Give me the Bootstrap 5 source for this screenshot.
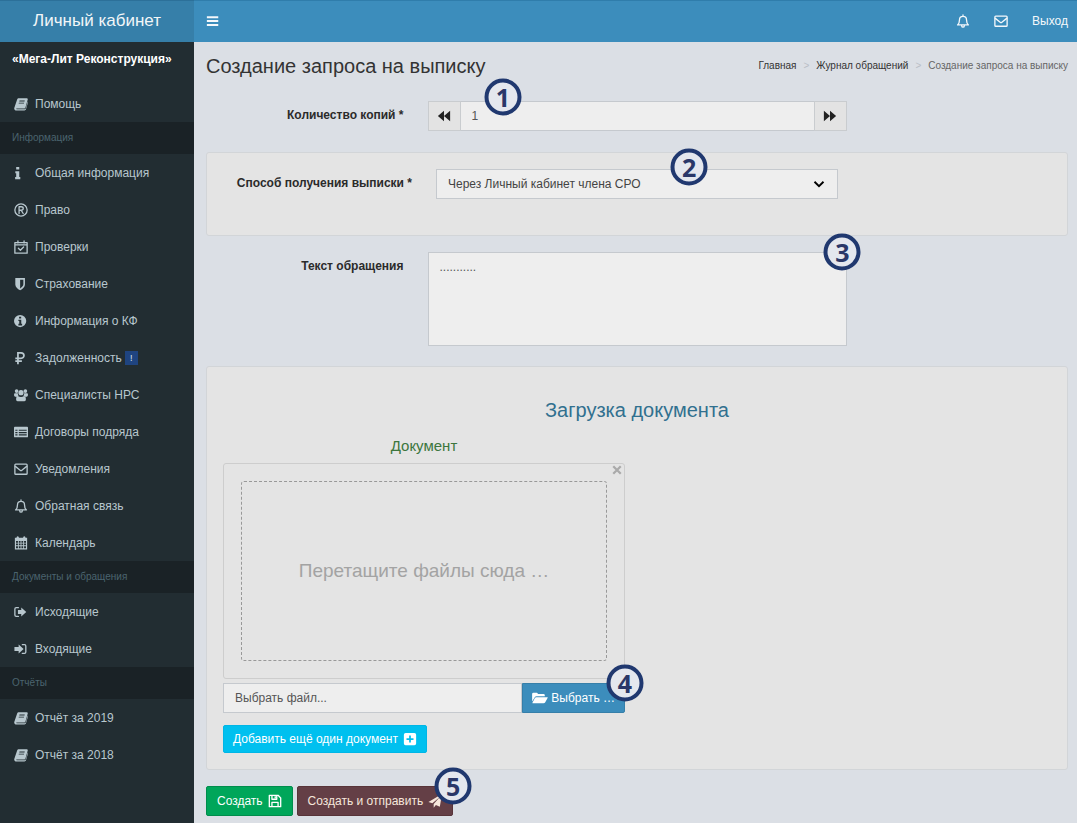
<!DOCTYPE html>
<html lang="ru">
<head>
<meta charset="utf-8">
<meta name="viewport" content="width=device-width, initial-scale=1">
<title>Личный кабинет — Создание запроса на выписку</title>
<link href="https://cdn.jsdelivr.net/npm/bootstrap@5.3.0/dist/css/bootstrap.min.css" rel="stylesheet">
<style>
  body { font-family: "Liberation Sans", Arial, sans-serif; font-size: 12px; line-height: 18px; color: #333; background: #dbdfe5; }
  svg { display: block; flex: none; }
  .ico { width: 14px; height: 14px; fill: currentColor; }
  .ico-wide { width: 16px; }
  .ln { fill: none; stroke: currentColor; stroke-width: 1.5; stroke-linejoin: round; stroke-linecap: round; }
  .shell { min-height: 100vh; }
  .side { width: 194px; background: #222d32; flex: none; }
  .brand { height: 42px; font-size: 17px; background: #367fa9; color: #f2f6f8; border-top: 1px solid #2c7099; padding-bottom: 2px; }
  .topbar { height: 42px; background: #3c8dbc; color: #f4f8fb; border-top: 1px solid #2f7dab; padding: 0 9px 2px 12px; }
  .topbar a, .topbar button { color: inherit; text-decoration: none; }
  .org { height: 43px; padding: 8px 12px 0; color: #fff; font-weight: 700; white-space: nowrap; }
  .side-link { height: 37px; padding: 0 14px; gap: 7px; color: #b8c7ce; text-decoration: none; font-size: 12px; white-space: nowrap; }
  .side-head { height: 32px; line-height: 32px; padding: 0 12px; margin: 0; font-size: 10px; color: #4b646f; background: #1a2226; }
  .flag { background: #1f4480; color: #dfe7ef; font-size: 9px; line-height: 14px; width: 13px; text-align: center; margin-left: -4px; }
  .content-area { padding: 0 9px 0 12px; }
  .page-title { font-size: 20px; line-height: 24px; margin: 0; }
  .title-row { padding-top: 12px; }
  .crumbs { --bs-breadcrumb-divider: ">"; --bs-breadcrumb-divider-color: #b9bec5; --bs-breadcrumb-item-padding-x: 7px; --bs-breadcrumb-item-active-color: #666; --bs-breadcrumb-margin-bottom: 0; font-size: 10px; }
  .crumbs a { color: #333; text-decoration: none; }
  .field-label { font-weight: 700; text-align: right; font-size: 12px; line-height: 18px; padding-top: 5px; color: #2b2b2b; }
  .field, .field:focus { background-color: #eee; border: 1px solid #c5c9ce; border-radius: 0; color: #555; font-size: 12px; line-height: 18px; padding: 5px 11px; }
  select.field, select.field:focus { background-position: right 12px center; background-size: 12px 12px; background-image: url("data:image/svg+xml,%3Csvg xmlns='http://www.w3.org/2000/svg' viewBox='0 0 16 16'%3E%3Cpath fill='none' stroke='%23000' stroke-width='2.5' d='m2 5 6 6 6-6'/%3E%3C/svg%3E"); color: #444; }
  textarea.field { height: 94px; resize: none; }
  .step-btn { width: 33px; background: #e3e3e3; border: 1px solid #c9cccf; border-radius: 0; padding: 0; display: grid; place-items: center; color: #222; }
  .panel { background: #e4e4e4; border: 1px solid #d2d5d8; border-radius: 3px; padding: 16px; }
  .panel-method { height: 84px; }
  .copies-row { padding-top: 23px; margin-bottom: 21px; }
  .text-row { margin-top: 16px; margin-bottom: 20px; }
  .panel-title { font-size: 20px; line-height: 24px; color: #31708f; margin: 15px 0 14px; }
  .doc-title { font-size: 15px; line-height: 20px; color: #3c763d; margin: 0 0 7px; }
  .preview { border: 1px solid #cdcdcd; border-radius: 3px; height: 216px; padding: 17px; position: relative; }
  .preview .shut { position: absolute; top: 0; right: 1px; width: 12px; height: 12px; padding: 0; border: 0; background: none; color: #aaa; }
  .drop { border: 1px dashed #999; border-radius: 3px; height: 100%; color: #a3a3a3; font-size: 19px; line-height: 24px; }
  .act { border-radius: 2px; font-size: 12px; line-height: 18px; padding: 4px 9px; color: #fff; display: inline-flex; align-items: center; gap: 5px; white-space: nowrap; border-width: 1px; }
  .act:hover { color: #fff; }
  .act-blue { background: #3c8dbc; border-color: #367fa9; gap: 3px; }
  .act-cyan { background: #00c0ef; border-color: #00b6e6; margin-top: 12px; }
  .act-green { background: #00a65a; border-color: #008d4c; padding: 5px 10px; }
  .act-plum { background: #643f46; border-color: #583439; color: #f6e7dc; padding: 5px 10px; }
  .num { width: 37px; height: 37px; border: 4px solid #20386f; border-radius: 50%; background: #e4e7ee; color: #2a3768; font: 700 25px/29px "Open Sans", sans-serif; text-align: center; z-index: 6; }
  .at-copies { left: 18%; top: -4px; }
  .at-method { left: 63%; top: -2px; }
  .at-message { left: 99%; top: 0; }
</style>
</head>
<body>
<svg class="d-none" aria-hidden="true">
  <symbol id="i-book" viewBox="0 0 16 16"><path fill-rule="evenodd" d="M5.6 1.5h9c.9 0 1.3.6 1.1 1.400l-2.600 9c-.2.700-.8 1.200-1.500 1.200H3c-.5 0-.5.900.1.900h9.300c.5 0 .8-.3 1-.8l2.300-8c.4.400.4.800.2 1.400l-2.200 7.500c-.2.800-.900 1.300-1.700 1.300H2.800C1 15.400-.2 13.800.4 12.200L3.500 3c.4-.9 1.100-1.500 2.100-1.500ZM6.300 4l-.3 1h6l.3-1ZM5.600 6.500l-.3 1h6l.3-1Z"/></symbol>
  <symbol id="i-info" viewBox="0 0 16 16"><path d="M2.500 1h3.500v3H2.500zM1.500 6H6v6.500h1.200V15H1.300v-2.500h1.200V8.300H1.500z"/></symbol>
  <symbol id="i-reg" viewBox="0 0 16 16"><circle class="ln" cx="8" cy="8" r="7"/><path class="ln" d="M5.800 12V4.300h2.500c3 0 3 4 0 4H6M8.300 8.500l2.200 3.500"/></symbol>
  <symbol id="i-check" viewBox="0 0 16 16"><path class="ln" d="M1 3h14v12H1zM1 5.500h14M4.500 1v2.500M11.500 1v2.500M5 9.500l2.300 2.300L11 8"/></symbol>
  <symbol id="i-shield" viewBox="0 0 16 16"><path fill-rule="evenodd" d="M1.500 1h11v7.500c0 3-2.500 5-5.500 6.700C4 13.500 1.500 11.500 1.500 8.500ZM7 3v10c2.500-1.500 3.700-2.800 3.700-4.600V3Z"/></symbol>
  <symbol id="i-infoc" viewBox="0 0 16 16"><path fill-rule="evenodd" d="M7 1a7 7 0 1 1 0 14A7 7 0 0 1 7 1ZM5.800 3v2.200h2.400V3ZM5 6.500V8h1v3.200H5V13h4.300v-1.800h-1V6.500Z"/></symbol>
  <symbol id="i-rub" viewBox="0 0 16 16"><path fill="none" stroke="currentColor" stroke-width="2" d="M4.500 15V2H8c4.500 0 4.500 6.300 0 6.300H1.500M1.500 11.500H9"/></symbol>
  <symbol id="i-users" viewBox="0 0 16 16"><circle cx="3" cy="3.500" r="2.100"/><circle cx="13" cy="3.500" r="2.100"/><circle cx="8" cy="5.300" r="3"/><path d="M.8 6h3.700c-.2 1.300.1 2.200.7 3-1 .1-1.700.5-2.200 1H1.500C-.3 10-.3 6.500.8 6ZM15.200 6h-3.700c.2 1.300-.1 2.200-.7 3 1 .1 1.700.5 2.200 1h1.500c1.800 0 1.800-3.500.7-4ZM4.500 9c2 1.600 5 1.600 7 0 2 0 2.200 3 2 4.800-.1.800-.7 1.200-1.500 1.200H4c-.8 0-1.400-.4-1.500-1.200C2.300 12 2.500 9 4.500 9Z"/></symbol>
  <symbol id="i-list" viewBox="0 0 16 16"><path fill-rule="evenodd" d="M1 2h14q1 0 1 1v10q0 1-1 1H1q-1 0-1-1V3q0-1 1-1Zm.5 3.300v1.400H4V5.300Zm4 0v1.400h9V5.300Zm-4 2.700v1.400H4V8Zm4 0v1.400h9V8Zm-4 2.700v1.400H4v-1.400Zm4 0v1.400h9v-1.400Z"/></symbol>
  <symbol id="i-mail" viewBox="0 0 16 16"><rect class="ln" x="1" y="2.500" width="14" height="11.500" rx="1"/><path class="ln" d="m1.500 5 5.500 4.500q1 .8 2 0L14.500 5"/></symbol>
  <symbol id="i-bell" viewBox="0 0 16 16"><path class="ln" d="M1.800 12.500C3.500 11 4 9.500 4 6.500 4 4.500 5.500 2.700 8 2.700s4 1.800 4 3.800c0 3 .5 4.500 2.200 6ZM8 1v1.500M6.500 13.500c.2 2 2.800 2 3 0"/></symbol>
  <symbol id="i-cal" viewBox="0 0 16 16"><path fill-rule="evenodd" d="M3 1q1.300-1.500 2.500 0v1h5V1q1.300-1.500 2.500 0v1h2v13.500H1V2h2ZM2.300 5.700v2h2.200v-2Zm3.200 0v2h2v-2Zm3 0v2h2v-2Zm3 0v2h2.200v-2Zm-9.200 3v2h2.200v-2Zm3.200 0v2h2v-2Zm3 0v2h2v-2Zm3 0v2h2.200v-2Zm-9.200 3v2.300h2.200v-2.300Zm3.200 0v2.300h2v-2.300Zm3 0v2.300h2v-2.300Zm3 0v2.300h2.200v-2.300Z"/></symbol>
  <symbol id="i-out" viewBox="0 0 16 16"><path class="ln" d="M5 3H2.500Q1 3 1 4.500v7Q1 13 2.500 13H5"/><path d="M8.300 2.800 14 8l-5.700 5.200v-3H4.500V5.800h3.800Z"/></symbol>
  <symbol id="i-in" viewBox="0 0 16 16"><path class="ln" d="M9.500 3H12q1.500 0 1.500 1.500v7Q13.500 13 12 13H9.500"/><path d="M5.300 2.800 11 8l-5.700 5.200v-3H.5V5.800h4.800Z"/></symbol>
  <symbol id="i-bars" viewBox="0 0 16 16"><path d="M1 2.500h13v2.300H1zM1 6.900h13v2.300H1zM1 11.300h13v2.300H1z"/></symbol>
  <symbol id="i-back" viewBox="0 0 16 16"><path d="M8 2v12L1 8ZM15 2v12L8 8Z"/></symbol>
  <symbol id="i-fwd" viewBox="0 0 16 16"><path d="M1 2v12l7-6ZM8 2v12l7-6Z"/></symbol>
  <symbol id="i-x" viewBox="0 0 16 16"><path fill="none" stroke="currentColor" stroke-width="3" d="m3 3 10 10M13 3 3 13"/></symbol>
  <symbol id="i-folder" viewBox="0 0 18 16"><path d="M0 12V3.500Q0 2 1.500 2h3.700q1.300 0 1.300 1.500H13q1.500 0 1.500 1.500v1H5Q3.700 6 3 7ZM4.700 7H17.300q.9 0 .5.800l-2.800 5q-.6 1.200-2 1.200H1q-1 0-.5-.9L3.200 8q.5-1 1.500-1Z"/></symbol>
  <symbol id="i-plus" viewBox="0 0 16 16"><path fill-rule="evenodd" d="M3 1h10q2 0 2 2v10q0 2-2 2H3q-2 0-2-2V3q0-2 2-2Zm4 3v3H4v2h3v3h2V9h3V7H9V4Z"/></symbol>
  <symbol id="i-save" viewBox="0 0 16 16"><path class="ln" d="M1.500 1.500h10l3 3v10h-13ZM4.500 14V9.500h7V14M4.500 2v4h5.500V2"/><path d="M7.500 2.500H9v2.500H7.500z"/></symbol>
  <symbol id="i-plane" viewBox="0 0 16 16"><path d="M16 0 13.500 14.500 9 12.700l-2.500 3V11.500L13.500 3.500 5 10.700.5 9Z"/></symbol>
</svg>

<div class="shell d-flex">
  <aside class="side">
    <div class="brand d-flex align-items-center justify-content-center">Личный кабинет</div>
    <div class="org">«Мега-Лит Реконструкция»</div>
    <nav aria-label="Основное меню">
      <a class="side-link d-flex align-items-center" href="#"><svg class="ico"><use href="#i-book"/></svg>Помощь</a>
      <h2 class="side-head">Информация</h2>
      <a class="side-link d-flex align-items-center" href="#"><svg class="ico"><use href="#i-info"/></svg>Общая информация</a>
      <a class="side-link d-flex align-items-center" href="#"><svg class="ico"><use href="#i-reg"/></svg>Право</a>
      <a class="side-link d-flex align-items-center" href="#"><svg class="ico"><use href="#i-check"/></svg>Проверки</a>
      <a class="side-link d-flex align-items-center" href="#"><svg class="ico"><use href="#i-shield"/></svg>Страхование</a>
      <a class="side-link d-flex align-items-center" href="#"><svg class="ico"><use href="#i-infoc"/></svg>Информация о КФ</a>
      <a class="side-link d-flex align-items-center" href="#"><svg class="ico"><use href="#i-rub"/></svg>Задолженность <span class="flag">!</span></a>
      <a class="side-link d-flex align-items-center" href="#"><svg class="ico"><use href="#i-users"/></svg>Специалисты НРС</a>
      <a class="side-link d-flex align-items-center" href="#"><svg class="ico"><use href="#i-list"/></svg>Договоры подряда</a>
      <a class="side-link d-flex align-items-center" href="#"><svg class="ico"><use href="#i-mail"/></svg>Уведомления</a>
      <a class="side-link d-flex align-items-center" href="#"><svg class="ico"><use href="#i-bell"/></svg>Обратная связь</a>
      <a class="side-link d-flex align-items-center" href="#"><svg class="ico"><use href="#i-cal"/></svg>Календарь</a>
      <h2 class="side-head">Документы и обращения</h2>
      <a class="side-link d-flex align-items-center" href="#"><svg class="ico"><use href="#i-out"/></svg>Исходящие</a>
      <a class="side-link d-flex align-items-center" href="#"><svg class="ico"><use href="#i-in"/></svg>Входящие</a>
      <h2 class="side-head">Отчёты</h2>
      <a class="side-link d-flex align-items-center" href="#"><svg class="ico"><use href="#i-book"/></svg>Отчёт за 2019</a>
      <a class="side-link d-flex align-items-center" href="#"><svg class="ico"><use href="#i-book"/></svg>Отчёт за 2018</a>
    </nav>
  </aside>

  <div class="flex-grow-1 overflow-hidden">
    <header class="topbar d-flex align-items-center justify-content-between">
      <button type="button" class="btn p-0 border-0" aria-label="Свернуть меню"><svg class="ico"><use href="#i-bars"/></svg></button>
      <div class="d-flex align-items-center gap-4">
        <a href="#" aria-label="Оповещения"><svg class="ico"><use href="#i-bell"/></svg></a>
        <a href="#" aria-label="Сообщения"><svg class="ico"><use href="#i-mail"/></svg></a>
        <a href="#">Выход</a>
      </div>
    </header>

    <main class="content-area">
      <div class="title-row d-flex justify-content-between align-items-center">
        <h1 class="page-title">Создание запроса на выписку</h1>
        <nav aria-label="Навигация">
          <ol class="breadcrumb crumbs">
            <li class="breadcrumb-item"><a href="#">Главная</a></li>
            <li class="breadcrumb-item"><a href="#">Журнал обращений</a></li>
            <li class="breadcrumb-item active" aria-current="page">Создание запроса на выписку</li>
          </ol>
        </nav>
      </div>

      <form>
        <div class="row copies-row">
          <label class="col-3 field-label" for="copies">Количество копий *</label>
          <div class="col-6">
            <div class="position-relative">
              <div class="input-group flex-nowrap">
                <button type="button" class="btn step-btn" aria-label="Меньше"><svg class="ico"><use href="#i-back"/></svg></button>
                <input id="copies" class="form-control field" type="text" value="1">
                <button type="button" class="btn step-btn" aria-label="Больше"><svg class="ico"><use href="#i-fwd"/></svg></button>
              </div>
              <span class="num position-absolute translate-middle at-copies">1</span>
            </div>
          </div>
        </div>

        <div class="panel panel-method">
          <div class="row">
            <label class="col-3 field-label" for="method">Способ получения выписки *</label>
            <div class="col-6">
              <div class="position-relative">
                <select id="method" class="form-select field"><option>Через Личный кабинет члена СРО</option></select>
                <span class="num position-absolute translate-middle at-method">2</span>
              </div>
            </div>
          </div>
        </div>

        <div class="row text-row">
          <label class="col-3 field-label" for="message">Текст обращения</label>
          <div class="col-6">
            <div class="position-relative">
              <textarea id="message" class="form-control field">...........</textarea>
              <span class="num position-absolute translate-middle at-message">3</span>
            </div>
          </div>
        </div>

        <section class="panel">
          <h2 class="panel-title text-center">Загрузка документа</h2>
          <div class="row">
            <div class="col-6">
              <h3 class="doc-title text-center">Документ</h3>
              <div class="preview">
                <button type="button" class="shut" aria-label="Закрыть"><svg class="w-100 h-100"><use href="#i-x"/></svg></button>
                <div class="drop d-flex align-items-center justify-content-center">Перетащите файлы сюда …</div>
              </div>
              <div class="d-flex mt-1">
                <input class="form-control field" type="text" value="Выбрать файл..." aria-label="Файл документа" readonly>
                <div class="position-relative">
                  <button type="button" class="btn act act-blue h-100 rounded-start-0"><svg class="ico ico-wide"><use href="#i-folder"/></svg>Выбрать …</button>
                  <span class="num position-absolute top-0 start-100 translate-middle">4</span>
                </div>
              </div>
              <button type="button" class="btn act act-cyan">Добавить ещё один документ <svg class="ico"><use href="#i-plus"/></svg></button>
            </div>
          </div>
        </section>

        <div class="d-flex gap-1 pt-3">
          <button type="submit" class="btn act act-green">Создать <svg class="ico"><use href="#i-save"/></svg></button>
          <div class="position-relative">
            <button type="submit" class="btn act act-plum">Создать и отправить <svg class="ico"><use href="#i-plane"/></svg></button>
            <span class="num position-absolute top-0 start-100 translate-middle">5</span>
          </div>
        </div>
      </form>
    </main>
  </div>
</div>
<script src="https://cdn.jsdelivr.net/npm/bootstrap@5.3.0/dist/js/bootstrap.bundle.min.js"></script>
</body>
</html>
